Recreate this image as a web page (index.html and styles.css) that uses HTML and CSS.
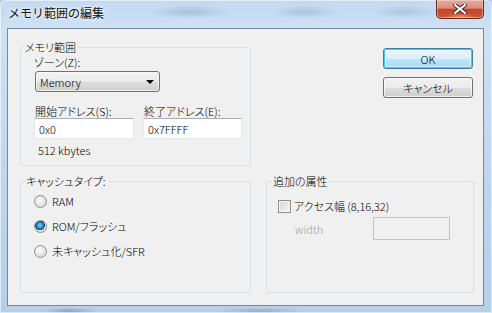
FILE: index.html
```html
<!DOCTYPE html>
<html lang="ja">
<head>
<meta charset="utf-8">
<title>メモリ範囲の編集</title>
<link rel="stylesheet" href="styles.css">
</head>
<body>
<div class="window">
  <div class="titlebar">
    <span class="title">メモリ範囲の編集</span>
    <div class="close">
      <svg width="14" height="10" viewBox="0 0 14 10"><path d="M2 1 L12 9 M12 1 L2 9" stroke="#3a2a28" stroke-width="4" stroke-linecap="square"/><path d="M2 1 L12 9 M12 1 L2 9" stroke="#ffffff" stroke-width="2" stroke-linecap="square"/></svg>
    </div>
  </div>
  <div class="frame">
    <div class="client">
      <fieldset class="group g-range">
        <legend>メモリ範囲</legend>
        <div class="group-body range-body">
          <div class="lbl">ゾーン(Z):</div>
          <div class="combo"><span>Memory</span><span class="arrow"></span></div>
          <div class="addr-row">
            <div class="addr">
              <div class="lbl">開始アドレス(S):</div>
              <div class="edit edit-start">0x0</div>
            </div>
            <div class="addr">
              <div class="lbl">終了アドレス(E):</div>
              <div class="edit edit-end">0x7FFFF</div>
            </div>
          </div>
          <div class="size">512 kbytes</div>
        </div>
      </fieldset>

      <div class="buttons">
        <div class="btn btn-default">OK</div>
        <div class="btn">キャンセル</div>
      </div>

      <fieldset class="group g-cache">
        <legend>キャッシュタイプ:</legend>
        <div class="group-body cache-body">
          <div class="radio-row"><span class="radio"></span><span>RAM</span></div>
          <div class="radio-row"><span class="radio checked"></span><span>ROM/フラッシュ</span></div>
          <div class="radio-row"><span class="radio"></span><span>未キャッシュ化/SFR</span></div>
        </div>
      </fieldset>

      <fieldset class="group g-attr">
        <legend>追加の属性</legend>
        <div class="group-body attr-body">
          <div class="check-row"><span class="checkbox"></span><span>アクセス幅 (8,16,32)</span></div>
          <div class="width-row"><span class="disabled-lbl">width</span><span class="edit edit-disabled"></span></div>
        </div>
      </fieldset>
    </div>
  </div>
</div>
</body>
</html>
```

FILE: styles.css
```css
* { box-sizing: border-box; }
html, body { margin: 0; padding: 0; }
body {
  width: 492px;
  height: 313px;
  overflow: hidden;
  font-family: "Noto Sans CJK JP", "Noto Sans", sans-serif;
  font-size: 11px;
  font-weight: 300;
  font-feature-settings: "palt";
  color: #000;
  background: #b9d1ea;
}
.window {
  width: 492px;
  height: 313px;
  display: flex;
  flex-direction: column;
  border-radius: 6px 6px 0 0;
  background:
    radial-gradient(ellipse 60px 10px at 190px 12px, rgba(120,140,165,0.35), rgba(120,140,165,0) 70%),
    radial-gradient(ellipse 50px 10px at 305px 12px, rgba(120,140,165,0.30), rgba(120,140,165,0) 70%),
    radial-gradient(ellipse 50px 10px at 405px 12px, rgba(120,140,165,0.28), rgba(120,140,165,0) 70%),
    radial-gradient(ellipse 40px 5px at 70px 311px, rgba(90,110,135,0.45), rgba(90,110,135,0) 70%),
    radial-gradient(ellipse 60px 5px at 260px 311px, rgba(90,110,135,0.35), rgba(90,110,135,0) 70%),
    linear-gradient(180deg, #c2d9f1 0%, #cfe2f5 10%, #bdd5ee 60%, #b6cfea 100%);
  box-shadow: inset 0 0 0 1px rgba(255,255,255,0.55);
}
.titlebar {
  height: 28px;
  flex: none;
  display: flex;
  align-items: flex-start;
  justify-content: space-between;
  padding: 0 8px 0 8px;
}
.title {
  font-size: 12px;
  font-weight: 400;
  font-feature-settings: normal;
  line-height: 14px;
  margin-top: 6px;
  color: #111;
  text-shadow: 0 0 6px rgba(255,255,255,0.9), 0 0 3px rgba(255,255,255,0.9);
}
.close {
  width: 48px;
  height: 19px;
  display: flex;
  align-items: center;
  justify-content: center;
  border: 1px solid #6b2a20;
  border-top: none;
  border-radius: 0 0 5px 5px;
  background:
    radial-gradient(ellipse 22px 6px at 50% 100%, rgba(255,190,120,0.7), rgba(255,190,120,0) 80%),
    linear-gradient(180deg, #e8aa9c 0%, #dd8c7a 45%, #c5452e 52%, #c9533a 100%);
  box-shadow: inset 0 0 0 1px rgba(255,255,255,0.35);
}
.frame {
  flex: 1;
  padding: 0 8px 7px 7px;
  display: flex;
}
.client {
  flex: 1;
  border: 1px solid #75889c;
  background: #f0f0f0;
  padding: 12px 0 12px 12px;
  display: grid;
  grid-template-columns: 231px 208px;
  grid-template-rows: 125px 1fr;
  column-gap: 15px;
  row-gap: 9px;
}
.group {
  margin: 0;
  padding: 0;
  border: 1px solid #d5dfe5;
  border-radius: 3px;
  min-width: 0;
}
.group legend {
  margin-left: 3px;
  padding: 0 2px 0 1px;
  line-height: 13px;
  height: 13px;
}
.g-attr legend { margin-left: 5px; }
.g-cache legend { margin-left: 4px; }
.lbl { line-height: 14px; height: 14px; }

.range-body { padding: 1px 0 6px 13px; }
.combo {
  width: 125px;
  height: 21px;
  margin-top: 2px;
  margin-left: 1px;
  border: 1px solid #707070;
  border-radius: 3px;
  background: linear-gradient(180deg, #f2f2f2 0%, #ebebeb 50%, #dddddd 51%, #cfcfcf 100%);
  box-shadow: inset 0 0 0 1px rgba(255,255,255,0.6);
  display: flex;
  align-items: center;
  justify-content: space-between;
  padding: 0 4px 0 4px;
  line-height: 14px;
}
.arrow {
  width: 0;
  height: 0;
  border-left: 4px solid transparent;
  border-right: 4px solid transparent;
  border-top: 4px solid #000;
  margin-right: 1px;
}
.addr-row {
  display: flex;
  gap: 9px;
  margin-top: 12px;
}
.addr .lbl { padding-left: 1px; }
.edit {
  display: flex;
  align-items: center;
  height: 21px;
  border: 1px solid #e3e9ef;
  border-top-color: #abadb3;
  background: #fff;
  padding: 0 4px;
  line-height: 14px;
}
.edit-start { width: 100px; }
.edit-end { width: 99px; }
.size {
  margin-top: 4px;
  padding-left: 4px;
  line-height: 14px;
}

.buttons {
  justify-self: end;
  margin-right: 1px;
  margin-top: 7px;
  display: flex;
  flex-direction: column;
  gap: 8px;
}
.btn {
  width: 90px;
  height: 21px;
  border: 1px solid #707070;
  border-radius: 3px;
  background: linear-gradient(180deg, #f2f2f2 0%, #ebebeb 50%, #dddddd 51%, #cfcfcf 100%);
  box-shadow: inset 0 0 0 1px rgba(255,255,255,0.7);
  display: flex;
  align-items: center;
  justify-content: center;
  line-height: 14px;
}
.btn-default {
  border-color: #3c7fb1;
  background: linear-gradient(180deg, #eaf6fd 0%, #d9f0fc 50%, #bee6fd 51%, #a7d9f5 100%);
  box-shadow: inset 0 0 0 1px #48c4f5, inset 0 0 0 2px rgba(255,255,255,0.5);
}

.cache-body {
  padding: 6px 0 0 13px;
  display: flex;
  flex-direction: column;
  gap: 11px;
}
.radio-row {
  display: flex;
  align-items: center;
  gap: 5px;
  line-height: 14px;
  height: 14px;
}
.radio {
  width: 13px;
  height: 13px;
  border-radius: 50%;
  border: 1px solid #8e8f8f;
  background: radial-gradient(circle at 40% 40%, #fbfbfb 0%, #e8e8e8 45%, #cfcfcf 100%);
  flex: none;
}
.radio.checked {
  background:
    radial-gradient(circle at 45% 40%, #8fd0f7 0%, #2f8fd0 30%, #16456f 52%, rgba(0,0,0,0) 56%),
    radial-gradient(circle at 40% 40%, #fbfbfb 0%, #e8e8e8 45%, #cfcfcf 100%);
}

.attr-body {
  padding: 11px 0 0 11px;
}
.check-row {
  display: flex;
  align-items: center;
  gap: 3px;
  line-height: 14px;
  height: 14px;
}
.checkbox {
  width: 13px;
  height: 13px;
  border: 1px solid #8e8f8f;
  background: linear-gradient(135deg, #d4d4d4 0%, #eaeaea 60%, #fafafa 100%);
  box-shadow: inset 0 0 0 1px #f4f4f4;
  flex: none;
}
.width-row {
  display: flex;
  align-items: center;
  margin-top: 4px;
  padding-left: 17px;
}
.disabled-lbl {
  width: 78px;
  color: #a0a0a0;
  line-height: 14px;
}
.edit-disabled {
  width: 77px;
  height: 23px;
  border: 1px solid #c2c6ca;
  background: #f0f0f0;
}
```
